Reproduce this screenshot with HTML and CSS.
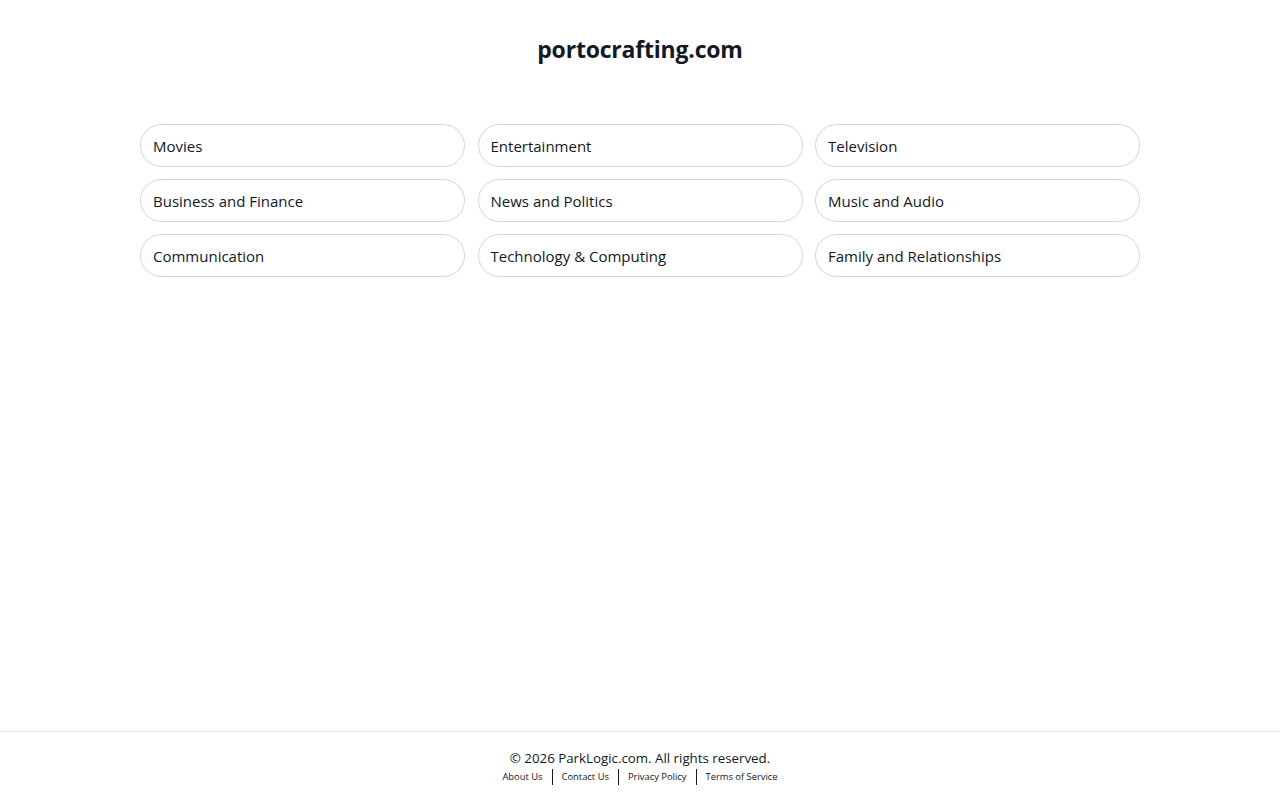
FILE: index.html
```html
<!DOCTYPE html>
<html lang="en">
<head>
<meta charset="utf-8">
<title>portocrafting.com</title>
<link rel="stylesheet" href="styles.css">
</head>
<body>
<div class="page">
  <main class="main">
    <h1 class="title">portocrafting.com</h1>
    <div class="grid">
      <a class="pill" href="#">Movies</a>
      <a class="pill" href="#">Entertainment</a>
      <a class="pill" href="#">Television</a>
      <a class="pill" href="#">Business and Finance</a>
      <a class="pill" href="#">News and Politics</a>
      <a class="pill" href="#">Music and Audio</a>
      <a class="pill" href="#">Communication</a>
      <a class="pill" href="#">Technology &amp; Computing</a>
      <a class="pill" href="#">Family and Relationships</a>
    </div>
  </main>
  <footer class="footer">
    <div class="copy">© 2026 ParkLogic.com. All rights reserved.</div>
    <nav class="links">
      <a href="#">About Us</a>
      <a href="#">Contact Us</a>
      <a href="#">Privacy Policy</a>
      <a href="#">Terms of Service</a>
    </nav>
  </footer>
</div>
</body>
</html>
```

FILE: styles.css
```css
* { box-sizing: border-box; }
html, body { margin: 0; padding: 0; }
body {
  font-family: "Open Sans", "Noto Sans", "Liberation Sans", sans-serif;
  color: #111827;
  background: #fff;
}
.page {
  min-height: 800px;
  display: flex;
  flex-direction: column;
}
.main {
  flex: 1;
  width: 1000px;
  margin: 0 auto;
}
.title {
  margin: 0;
  padding-top: 32px;
  height: 124px;
  text-align: center;
  font-size: 23px;
  font-weight: 700;
  line-height: 34px;
  letter-spacing: -0.2px;
}
.grid {
  display: grid;
  grid-template-columns: repeat(3, 1fr);
  column-gap: 12.5px;
  row-gap: 12px;
}
.pill {
  display: flex;
  align-items: center;
  height: 43px;
  padding: 0 12px;
  border: 1px solid #d1d5db;
  border-radius: 22px;
  font-size: 15px;
  color: #111827;
  text-decoration: none;
}
.footer {
  border-top: 1px solid #e5e7eb;
  height: 69px;
  padding-top: 16px;
  text-align: center;
}
.copy {
  font-size: 13.3px;
  line-height: 20px;
  color: #111827;
}
.links {
  display: flex;
  justify-content: center;
  margin-top: 1px;
}
.links a {
  font-size: 9.4px;
  line-height: 16px;
  color: #111827;
  text-decoration: none;
  padding: 0 9px;
  border-left: 1px solid #111827;
}
.links a:first-child { border-left: none; }
```
